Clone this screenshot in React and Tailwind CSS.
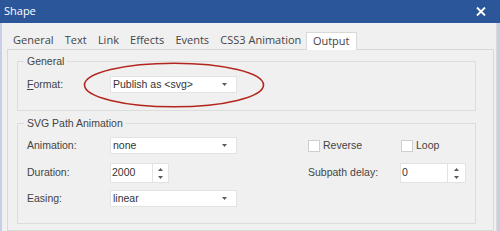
const Caret = ({ up }) => (
  <svg width="5" height="3" viewBox="0 0 5 3">
    <path d={up ? 'M0 3h5L2.5 0z' : 'M0 0h5L2.5 3z'} fill="#5a5a5a" />
  </svg>
)

function Select({ value }) {
  return (
    <div className="flex h-[17px] w-[127px] items-center justify-between border border-[#e2e2e2] bg-white pl-[2px] pr-[9px] text-[#333]">
      <span>{value}</span>
      <Caret />
    </div>
  )
}

function Spin({ value, w, sw }) {
  return (
    <div className="flex h-[20px]">
      <div className={`flex items-center border border-[#e2e2e2] bg-white pl-[1px] text-[#333] ${w}`}>
        {value}
      </div>
      <div className={`flex flex-col items-center justify-center gap-[5px] border border-l-0 border-[#e2e2e2] bg-white ${sw}`}>
        <Caret up />
        <Caret />
      </div>
    </div>
  )
}

function Check({ label }) {
  return (
    <div className="flex items-center">
      <div className="h-[12px] w-[12px] border border-[#cfcfcf] bg-white" />
      <span className="ml-[3px]">{label}</span>
    </div>
  )
}

export default function App() {
  const tabs = ['General', 'Text', 'Link', 'Effects', 'Events', 'CSS3 Animation', 'Output']
  const row = 'grid grid-cols-[83px_198px_92px_auto] items-center pl-[9px]'

  return (
    <div className="relative flex h-[231px] w-[500px] flex-col overflow-hidden bg-[#f0f0f0] font-['Liberation_Sans',Arial,sans-serif] text-[10.5px] text-[#444]">
      {/* title bar */}
      <div className="flex h-[23px] shrink-0 items-center justify-between bg-[#2b579a] pl-[4px] pr-[14px] font-['Open_Sans',sans-serif] text-[11px] text-white">
        <span>Shape</span>
        <svg width="10" height="9" viewBox="0 0 10 9">
          <path d="M1 0.5l8 8M9 0.5l-8 8" stroke="#fff" strokeWidth="1.9" />
        </svg>
      </div>

      <div className="flex flex-1 flex-col border-l-2 border-r-[3px] border-[#c6cfe6]">
        <div className="flex flex-1 flex-col border-r border-[#dadada]">
          {/* tabs */}
          <div className="flex h-[26px] shrink-0 items-end pl-[5.5px] font-['Open_Sans',sans-serif] text-[11px] text-[#444]">
            {tabs.map((t) => (
              <div
                key={t}
                className={
                  t === 'Output'
                    ? 'relative z-10 -mb-px ml-[-1px] flex h-[18px] items-center border border-b-0 border-[#d9d9d9] bg-white px-[6px]'
                    : 'flex h-[17px] items-center px-[5.6px]'
                }
              >
                {t}
              </div>
            ))}
          </div>

          {/* panel */}
          <div className="ml-[5px] mr-[2px] flex-1 border border-[#d9d9d9] bg-[#f0f0f0] pl-[9px] pr-[17px] pt-[4px]">
            <fieldset className="border border-[#dcdcdc] pb-[17px]">
              <legend className="ml-[6px] px-[3px] leading-[14px]">General</legend>
              <div className="mt-[8px] flex items-center pl-[9px]">
                <span className="w-[83px]">
                  <u>F</u>ormat:
                </span>
                <Select value="Publish as <svg>" />
              </div>
            </fieldset>

            <fieldset className="mt-[5px] border border-[#dcdcdc] pb-[16px]">
              <legend className="ml-[6px] px-[3px] leading-[14px]">SVG Path Animation</legend>
              <div className={`mt-[7px] ${row}`}>
                <span>Animation:</span>
                <Select value="none" />
                <Check label="Reverse" />
                <div className="ml-[1px]">
                  <Check label="Loop" />
                </div>
              </div>
              <div className={`mt-[9px] ${row}`}>
                <span>Duration:</span>
                <Spin value="2000" w="w-[43px]" sw="w-[16px]" />
                <span>Subpath delay:</span>
                <Spin value="0" w="w-[48px]" sw="w-[18px]" />
              </div>
              <div className={`mt-[7px] ${row}`}>
                <span>Easing:</span>
                <Select value="linear" />
              </div>
            </fieldset>
          </div>
        </div>
      </div>

      {/* red annotation ellipse */}
      <svg className="absolute left-[83px] top-[62px]" width="182" height="46" viewBox="0 0 182 46">
        <ellipse cx="91" cy="23" rx="89.5" ry="21.8" fill="none" stroke="#b3261e" strokeWidth="1.6" />
      </svg>
    </div>
  )
}
